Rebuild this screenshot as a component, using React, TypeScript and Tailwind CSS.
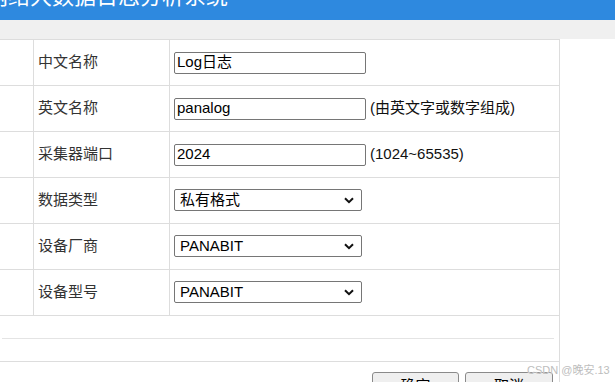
import React from "react";

const font = { fontFamily: '"Liberation Sans", "Noto Sans CJK SC", sans-serif' };

function Row({ label, children }: { label: string; children: React.ReactNode }) {
  return (
    <div className="flex h-[46px] border-b border-[#dddddd]">
      <div className="w-[34px] shrink-0 border-r border-[#dddddd]" />
      <div className="w-[136px] shrink-0 border-r border-[#dddddd] flex items-center pl-[4px] text-[15px] text-[#333333]">
        {label}
      </div>
      <div className="flex-1 flex items-center pl-[4px]">{children}</div>
    </div>
  );
}

function TextInput({ value }: { value: string }) {
  return (
    <input
      readOnly
      value={value}
      className="w-[192px] h-[22px] border border-[#767676] rounded-[2px] px-[2px] text-[15px] text-black bg-white outline-none"
      style={font}
    />
  );
}

function Select({ value }: { value: string }) {
  return (
    <div className="relative w-[188px] h-[22px] mt-[-1px]">
      <select
        value={value}
        onChange={() => {}}
        className="block appearance-none w-[188px] h-[22px] border border-[#767676] rounded-[2px] pl-[5px] text-[15px] leading-[20px] text-black bg-white outline-none"
        style={font}
      >
        <option value={value}>{value}</option>
      </select>
      <svg
        className="absolute right-[8px] top-[8px] pointer-events-none"
        width="10"
        height="7"
        viewBox="0 0 10 7"
      >
        <path d="M1 1.2 L5 5.2 L9 1.2" fill="none" stroke="#111" strokeWidth="2" />
      </svg>
    </div>
  );
}

export default function App() {
  return (
    <div className="relative w-[615px] h-[382px] overflow-hidden bg-white" style={font}>
      <div className="h-[20px] bg-[#2e89df] overflow-hidden">
        <div className="mt-[-16px] ml-[-14px] text-[22px] leading-[26px] text-white whitespace-nowrap">
          网络大数据日志分析系统
        </div>
      </div>
      <div className="h-[19px] bg-[#f0f0f0]" />
      <div className="w-[560px] h-[343px] border-t border-r border-[#dddddd]">
        <Row label="中文名称">
          <TextInput value="Log日志" />
        </Row>
        <Row label="英文名称">
          <TextInput value="panalog" />
          <span className="ml-[4px] text-[15px] text-[#111111]">(由英文字或数字组成)</span>
        </Row>
        <Row label="采集器端口">
          <TextInput value="2024" />
          <span className="ml-[4px] text-[15px] text-[#111111]">(1024~65535)</span>
        </Row>
        <Row label="数据类型">
          <Select value="私有格式" />
        </Row>
        <Row label="设备厂商">
          <Select value="PANABIT" />
        </Row>
        <Row label="设备型号">
          <Select value="PANABIT" />
        </Row>
        <div className="h-[46px] border-b border-[#dddddd] pt-[22px] pl-[2px] pr-[5px]">
          <div className="border-t border-[#e4e4e4]" />
        </div>
        <div className="flex justify-end gap-[6px] pr-[6px] pt-[10px]">
          <button className="w-[87px] h-[26px] border border-[#8a8a8a] rounded-[3px] bg-[#efefef] text-[15px] text-black leading-[26px]">
            确定
          </button>
          <button className="w-[88px] h-[26px] border border-[#8a8a8a] rounded-[3px] bg-[#efefef] text-[15px] text-black leading-[26px]">
            取消
          </button>
        </div>
      </div>
      <div className="absolute left-[527px] top-[362px] text-[11px] text-[#bdbdbd] whitespace-nowrap" style={{ textShadow: "0 0 1px #fff" }}>
        CSDN @晚安.13
      </div>
    </div>
  );
}
